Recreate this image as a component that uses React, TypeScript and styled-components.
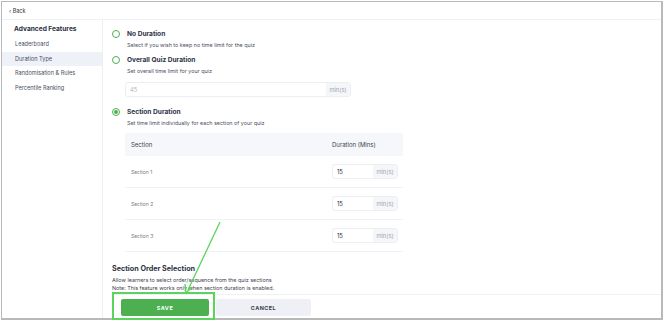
import React from 'react'
import styled, { createGlobalStyle } from 'styled-components'

const GlobalStyle = createGlobalStyle`
    html, body {
        margin: 0;
        padding: 0;
        background: #fff;
    }
    body {
        font-family: Inter, "Noto Sans", sans-serif;
        color: #2b2f3f;
    }
`

const Page = styled.div`
    width: 670px;
    height: 322px;
    padding: 1px 0 0 1px;
    box-sizing: border-box;
`

const Frame = styled.div`
    position: relative;
    width: 662px;
    height: 319px;
    box-sizing: border-box;
    border: 1px solid #b9b9b9;
    border-right-width: 2px;
    border-bottom-width: 2px;
    display: flex;
    flex-direction: column;
    overflow: hidden;
    background: #fff;
`

const TopBar = styled.div`
    height: 16px;
    flex: none;
    display: flex;
    align-items: center;
    padding: 1px 0 0 7px;
    font-size: 5.5px;
    color: #333;
    border-bottom: 1px solid #f0f1f5;
`

const Body = styled.div`
    flex: 1;
    display: flex;
    min-height: 0;
`

const Sidebar = styled.aside`
    width: 100px;
    flex: none;
    border-right: 1px solid #eeeff3;
    padding-top: 4px;
`

const SideTitle = styled.div`
    font-size: 6.6px;
    font-weight: 700;
    color: #2b2f3f;
    padding: 0 0 2px 12px;
    height: 11px;
    line-height: 11px;
`

const SideItem = styled.div<{ $active?: boolean }>`
    height: 14.7px;
    line-height: 14.7px;
    padding-left: 13px;
    font-size: 5.6px;
    color: #4b4f5c;
    background: ${({ $active }) => ($active ? '#eef1f7' : 'transparent')};
`

const Main = styled.main`
    flex: 1;
    display: flex;
    flex-direction: column;
    padding: 9px 0 0 9px;
    min-width: 0;
`

const Option = styled.div<{ $gap?: number }>`
    display: grid;
    grid-template-columns: 8px 1fr;
    column-gap: 7px;
    align-items: center;
    margin-top: ${({ $gap }) => $gap ?? 0}px;
`

const Radio = styled.span<{ $checked?: boolean }>`
    width: 8px;
    height: 8px;
    box-sizing: border-box;
    border-radius: 50%;
    border: 1.3px solid #4caf50;
    display: flex;
    align-items: center;
    justify-content: center;

    &::after {
        content: '';
        width: 4px;
        height: 4px;
        border-radius: 50%;
        background: #4caf50;
        display: ${({ $checked }) => ($checked ? 'block' : 'none')};
    }
`

const OptionTitle = styled.div`
    font-size: 6.6px;
    font-weight: 700;
    color: #2e3347;
    line-height: 10px;
`

const OptionHint = styled.div`
    grid-column: 2;
    font-size: 5.4px;
    color: #4d5160;
    line-height: 8px;
    margin-top: 2px;
`

const InputRow = styled.div`
    margin: 7px 0 0 13px;
`

const InputGroup = styled.div<{ $width: number }>`
    width: ${({ $width }) => $width}px;
    height: 15px;
    box-sizing: border-box;
    border: 1px solid #eceef3;
    border-radius: 3px;
    display: flex;
    overflow: hidden;
    background: #fff;
`

const InputValue = styled.div<{ $muted?: boolean }>`
    flex: 1;
    font-size: 5.8px;
    line-height: 13px;
    padding-left: 4px;
    color: ${({ $muted }) => ($muted ? '#b4b7c0' : '#2b2f3f')};
`

const Suffix = styled.div`
    width: 24px;
    background: #f5f6f9;
    color: #a3a7b2;
    font-size: 5.8px;
    line-height: 13px;
    text-align: center;
`

const Table = styled.div`
    width: 278px;
    margin: 6px 0 0 13px;
`

const HeadRow = styled.div`
    height: 23px;
    display: grid;
    grid-template-columns: 1fr 71px;
    align-items: center;
    background: #f6f7fb;
    padding-left: 6px;
    font-size: 6px;
    color: #3b3f4d;
`

const Row = styled.div`
    height: 32px;
    box-sizing: border-box;
    display: grid;
    grid-template-columns: 1fr 71px;
    align-items: center;
    padding-left: 6px;
    border-bottom: 1px solid #f1f2f5;
`

const SectionName = styled.div`
    font-size: 5px;
    color: #777b87;
`

const OrderBlock = styled.div`
    margin-top: 12px;
`

const OrderTitle = styled.div`
    font-size: 7.2px;
    font-weight: 700;
    color: #2e3347;
    line-height: 10px;
    margin-bottom: 2px;
`

const OrderText = styled.div`
    font-size: 5.4px;
    color: #3f4350;
    line-height: 8px;
`

const Footer = styled.div`
    margin-top: 2px;
    border-top: 1px solid #f0f1f4;
    display: flex;
    gap: 7px;
    padding: 4px 0 0 9px;
`

const Button = styled.div<{ $primary?: boolean }>`
    width: ${({ $primary }) => ($primary ? 88 : 95)}px;
    height: 17px;
    border-radius: 2px;
    display: flex;
    align-items: center;
    justify-content: center;
    font-size: 5.4px;
    font-weight: 700;
    letter-spacing: 0.5px;
    background: ${({ $primary }) => ($primary ? '#4caf50' : '#eef0f5')};
    color: ${({ $primary }) => ($primary ? '#fff' : '#3a3e4b')};
`

/* annotation drawn over the screenshot */
const Highlight = styled.div`
    position: absolute;
    left: 112px;
    top: 292px;
    width: 103px;
    height: 28px;
    box-sizing: border-box;
    border: 2px solid #5ad45a;
`

const Arrow = styled.svg`
    position: absolute;
    left: 0;
    top: 0;
    pointer-events: none;
`

const sections = ['Section 1', 'Section 2', 'Section 3']

const App: React.FC = () => {
  return (
    <Page>
      <GlobalStyle />
      <Frame>
        <TopBar>‹ Back</TopBar>
        <Body>
          <Sidebar>
            <SideTitle>Advanced Features</SideTitle>
            <SideItem>Leaderboard</SideItem>
            <SideItem $active>Duration Type</SideItem>
            <SideItem>Randomisation &amp; Rules</SideItem>
            <SideItem>Percentile Ranking</SideItem>
          </Sidebar>
          <Main>
            <Option>
              <Radio />
              <OptionTitle>No Duration</OptionTitle>
              <OptionHint>Select if you wish to keep no time limit for the quiz</OptionHint>
            </Option>
            <Option $gap={6}>
              <Radio />
              <OptionTitle>Overall Quiz Duration</OptionTitle>
              <OptionHint>Set overall time limit for your quiz</OptionHint>
            </Option>
            <InputRow>
              <InputGroup $width={226}>
                <InputValue $muted>45</InputValue>
                <Suffix>min(s)</Suffix>
              </InputGroup>
            </InputRow>
            <Option $gap={10}>
              <Radio $checked />
              <OptionTitle>Section Duration</OptionTitle>
              <OptionHint>Set time limit individually for each section of your quiz</OptionHint>
            </Option>
            <Table>
              <HeadRow>
                <span>Section</span>
                <span>Duration (Mins)</span>
              </HeadRow>
              {sections.map((name) => (
                <Row key={name}>
                  <SectionName>{name}</SectionName>
                  <InputGroup $width={66}>
                    <InputValue>15</InputValue>
                    <Suffix>min(s)</Suffix>
                  </InputGroup>
                </Row>
              ))}
            </Table>
            <OrderBlock>
              <OrderTitle>Section Order Selection</OrderTitle>
              <OrderText>Allow learners to select order/sequence from the quiz sections</OrderText>
              <OrderText>Note: This feature works only when section duration is enabled.</OrderText>
            </OrderBlock>
            <Footer>
              <Button $primary>SAVE</Button>
              <Button>CANCEL</Button>
            </Footer>
          </Main>
        </Body>
      </Frame>
      <Highlight />
      <Arrow width={670} height={322}>
        <line x1={220} y1={222} x2={188} y2={290} stroke="#5ad45a" strokeWidth={1.3} />
        <path d="M186 293 L185 284 M186 293 L192 287" stroke="#5ad45a" strokeWidth={1.4} fill="none" />
      </Arrow>
    </Page>
  )
}

export default App
